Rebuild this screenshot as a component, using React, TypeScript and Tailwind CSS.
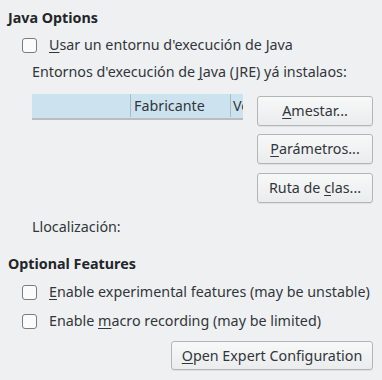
const font = { fontFamily: '"Noto Sans", sans-serif' };

function Mn({ pre = '', m, post }: { pre?: string; m: string; post: string }) {
  return (
    <span>
      {pre}
      <span className="underline decoration-1 underline-offset-[2px]">{m}</span>
      {post}
    </span>
  );
}

function Check({ children }: { children: React.ReactNode }) {
  return (
    <div className="flex h-[18px] items-center pl-[22px]">
      <span className="h-[15px] w-[15px] shrink-0 rounded-[3px] border border-[#7a7c7e] bg-[#fbfbfb]" />
      <span className="ml-[12px] whitespace-nowrap leading-[18px]">{children}</span>
    </div>
  );
}

function Btn({ children, className = '' }: { children: React.ReactNode; className?: string }) {
  return (
    <div
      className={`flex items-center justify-center whitespace-nowrap rounded-[3px] border border-[#b4b5b6] bg-gradient-to-b from-[#f7f8f8] to-[#ebeced] shadow-[0_1px_0_rgba(0,0,0,0.06)] ${className}`}
    >
      {children}
    </div>
  );
}

export default function App() {
  return (
    <div className="h-[380px] w-[382px] overflow-hidden bg-[#eff0f1] text-[14.3px] text-[#31363b]" style={font}>
      <div className="mt-[9px] h-[18px] pl-[8px] font-bold leading-[18px] text-[#232629]">Java Options</div>

      <div className="mt-[9px]">
        <Check>
          <Mn m="U" post="sar un entornu d'execución de Java" />
        </Check>
      </div>

      <div className="mt-[9px] h-[18px] whitespace-nowrap pl-[32px] leading-[18px]">
        Entornos d'execución de <Mn m="J" post="ava (JRE) yá instalaos:" />
      </div>

      <div className="mt-[13px] flex pl-[32px]">
        <div className="h-[24px] w-[211px] shrink-0 overflow-hidden bg-[#cce3ef] shadow-[0_2px_0_#bbbcbd]">
          <div className="flex h-[23px] items-center">
            <div className="h-full w-[99px] shrink-0 border-r border-[#a9bcc7]" />
            <div className="flex h-full w-[100px] shrink-0 items-center border-r border-[#a9bcc7] pl-[3px]">
              Fabricante
            </div>
            <div className="shrink-0 whitespace-nowrap pl-[2px]">Versión</div>
          </div>
        </div>

        <div className="ml-[14px] mt-[2px] flex flex-col">
          <Btn className="h-[30px] w-[116px]">
            <Mn m="A" post="mestar..." />
          </Btn>
          <Btn className="mt-[8px] h-[30px] w-[116px]">
            <Mn m="P" post="arámetros..." />
          </Btn>
          <Btn className="mt-[9px] h-[30px] w-[116px]">
            <Mn pre="Ruta de " m="c" post="las..." />
          </Btn>
        </div>
      </div>

      <div className="mt-[15px] h-[18px] pl-[32px] leading-[18px]">Llocalización:</div>

      <div className="mt-[19px] h-[18px] pl-[8px] font-bold leading-[18px] text-[#232629]">Optional Features</div>

      <div className="mt-[10px]">
        <Check>
          <Mn m="E" post="nable experimental features (may be unstable)" />
        </Check>
      </div>
      <div className="mt-[11px]">
        <Check>
          <Mn pre="Enable " m="m" post="acro recording (may be limited)" />
        </Check>
      </div>

      <div className="mt-[11px] flex justify-end pr-[9px]">
        <Btn className="h-[29px] w-[202px]">
          <Mn m="O" post="pen Expert Configuration" />
        </Btn>
      </div>
    </div>
  );
}
